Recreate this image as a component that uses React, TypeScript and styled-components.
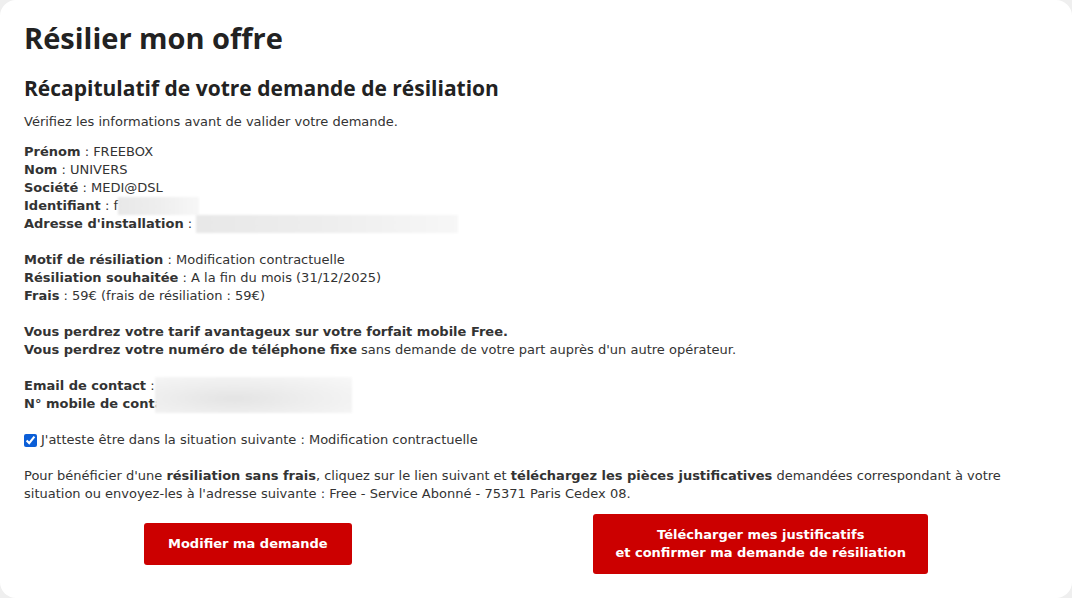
import styled, { createGlobalStyle } from 'styled-components';

const GlobalStyle = createGlobalStyle`
  html, body {
    margin: 0;
    padding: 0;
    background: #efefef;
  }

  body {
    font-family: "DejaVu Sans", "Liberation Sans", sans-serif;
    color: #333333;
  }
`;

const Card = styled.main`
  box-sizing: border-box;
  width: 1072px;
  height: 598px;
  padding: 21px 24px 0;
  background: #ffffff;
  border-radius: 16px;
  overflow: hidden;
`;

const Title = styled.h1`
  margin: 0 0 21px;
  font-family: "Open Sans", "DejaVu Sans", sans-serif;
  font-size: 29px;
  line-height: 34px;
  font-weight: 700;
  color: #222222;
`;

const Subtitle = styled.h2`
  margin: 0 0 13px;
  font-family: "Open Sans", "DejaVu Sans", sans-serif;
  font-size: 21px;
  line-height: 24px;
  font-weight: 700;
  color: #222222;
`;

const Text = styled.p<{ $gap?: number }>`
  margin: 0 0 ${(p) => p.$gap ?? 18}px;
  font-size: 13px;
  line-height: 18px;
`;

const Block = styled.div`
  position: relative;
  margin-bottom: 18px;
  font-size: 13px;
  line-height: 18px;
`;

const Line = styled.div``;

const Blur = styled.span<{ $width: number }>`
  display: inline-block;
  vertical-align: top;
  width: ${(p) => p.$width}px;
  height: 18px;
  background: linear-gradient(90deg, #e8e8e8 0%, #eeeeee 50%, #f7f7f7 100%);
  filter: blur(1px);
`;

const BlurOverlay = styled.span`
  position: absolute;
  left: 131px;
  top: 0;
  width: 197px;
  height: 36px;
  background: radial-gradient(ellipse at 40% 60%, #e4e4e4 0%, #eeeeee 45%, #f8f8f8 100%);
  filter: blur(1px);
`;

const CheckRow = styled.label`
  display: flex;
  align-items: center;
  gap: 4px;
  margin-bottom: 18px;
  font-size: 13px;
  line-height: 18px;
`;

const Check = styled.input`
  width: 13px;
  height: 13px;
  margin: 0;
  accent-color: #0b5ed7;
`;

const Actions = styled.div`
  display: flex;
  align-items: center;
  justify-content: space-between;
  padding: 0 120px;
`;

const RedButton = styled.button<{ $tall?: boolean }>`
  padding: 0 ${(p) => (p.$tall ? 22 : 24)}px;
  height: ${(p) => (p.$tall ? 60 : 42)}px;
  border: none;
  border-radius: 3px;
  background: #cc0000;
  color: #ffffff;
  font-family: inherit;
  font-size: 13px;
  line-height: 18px;
  font-weight: 700;
  cursor: pointer;
`;

export default function App() {
  return (
    <>
      <GlobalStyle />
      <Card>
        <Title>Résilier mon offre</Title>
        <Subtitle>Récapitulatif de votre demande de résiliation</Subtitle>
        <Text $gap={12}>Vérifiez les informations avant de valider votre demande.</Text>

        <Block>
          <Line>
            <b>Prénom</b> : FREEBOX
          </Line>
          <Line>
            <b>Nom</b> : UNIVERS
          </Line>
          <Line>
            <b>Société</b> : MEDI@DSL
          </Line>
          <Line>
            <b>Identifiant</b> : f<Blur $width={81} />
          </Line>
          <Line>
            <b>Adresse d'installation</b> : <Blur $width={262} />
          </Line>
        </Block>

        <Block>
          <Line>
            <b>Motif de résiliation</b> : Modification contractuelle
          </Line>
          <Line>
            <b>Résiliation souhaitée</b> : A la fin du mois (31/12/2025)
          </Line>
          <Line>
            <b>Frais</b> : 59€ (frais de résiliation : 59€)
          </Line>
        </Block>

        <Block>
          <Line>
            <b>Vous perdrez votre tarif avantageux sur votre forfait mobile Free.</b>
          </Line>
          <Line>
            <b>Vous perdrez votre numéro de téléphone fixe</b> sans demande de votre part auprès d'un
            autre opérateur.
          </Line>
        </Block>

        <Block>
          <Line>
            <b>Email de contact</b> :
          </Line>
          <Line>
            <b>N° mobile de contact</b> :
          </Line>
          <BlurOverlay />
        </Block>

        <CheckRow>
          <Check type="checkbox" defaultChecked />
          J'atteste être dans la situation suivante : Modification contractuelle
        </CheckRow>

        <Text $gap={11}>
          Pour bénéficier d'une <b>résiliation sans frais</b>, cliquez sur le lien suivant et{' '}
          <b>téléchargez les pièces justificatives</b> demandées correspondant à votre situation ou
          envoyez-les à l'adresse suivante : Free - Service Abonné - 75371 Paris Cedex 08.
        </Text>

        <Actions>
          <RedButton type="button">Modifier ma demande</RedButton>
          <RedButton type="button" $tall>
            Télécharger mes justificatifs
            <br />
            et confirmer ma demande de résiliation
          </RedButton>
        </Actions>
      </Card>
    </>
  );
}
